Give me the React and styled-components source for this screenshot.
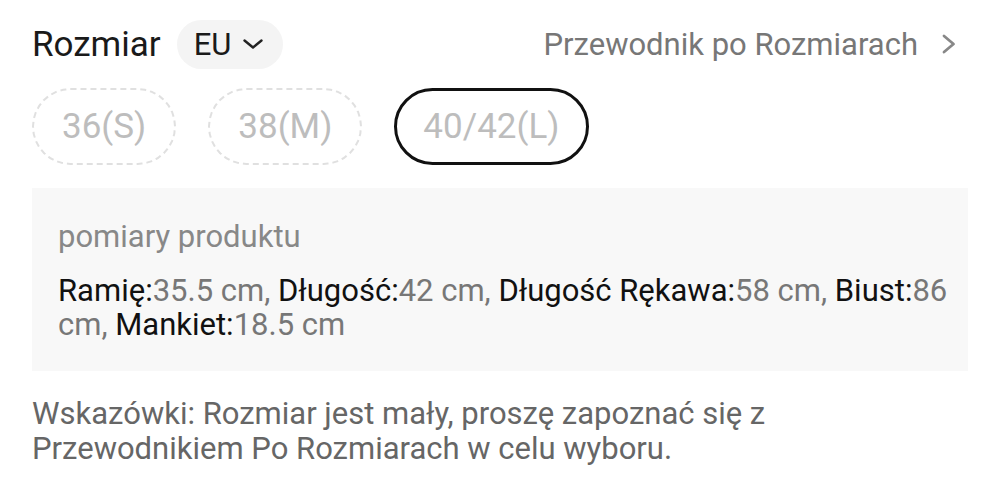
import React from 'react'
import styled, { createGlobalStyle } from 'styled-components'

const sizes = [
    { label: '36(S)', selected: false },
    { label: '38(M)', selected: false },
    { label: '40/42(L)', selected: true },
]

const measures = [
    { name: 'Ramię', value: '35.5 cm' },
    { name: 'Długość', value: '42 cm' },
    { name: 'Długość Rękawa', value: '58 cm' },
    { name: 'Biust', value: '86 cm' },
    { name: 'Mankiet', value: '18.5 cm' },
]

const GlobalStyle = createGlobalStyle`
    html, body {
        margin: 0;
        padding: 0;
        background: #fff;
    }
    body {
        font-family: Roboto, "Noto Sans", Arial, sans-serif;
        -webkit-font-smoothing: antialiased;
    }
`

const Page = styled.div`
    width: 1000px;
    height: 492px;
    box-sizing: border-box;
    padding: 19px 32px 0 32px;
    background: #fff;
    overflow: hidden;
`

const Header = styled.div`
    display: flex;
    align-items: center;
    justify-content: space-between;
    height: 50px;
`

const TitleGroup = styled.div`
    display: flex;
    align-items: center;
    gap: 16px;
`

const Title = styled.h2`
    margin: 0;
    font-size: 35px;
    font-weight: 400;
    color: #1a1a1a;
    line-height: 1;
`

const UnitPicker = styled.button`
    display: flex;
    align-items: center;
    gap: 12px;
    height: 49px;
    padding: 0 20px 0 17px;
    border: none;
    border-radius: 25px;
    background: #f4f4f4;
    font-family: inherit;
    font-size: 31px;
    color: #1a1a1a;
    cursor: pointer;
`

const GuideLink = styled.a`
    display: flex;
    align-items: center;
    gap: 24px;
    margin-right: 12px;
    font-size: 31px;
    color: #777;
    text-decoration: none;
`

const SizeRow = styled.div`
    display: flex;
    gap: 32px;
    margin-top: 19px;
`

const SizePill = styled.div`
    display: flex;
    align-items: center;
    justify-content: center;
    box-sizing: border-box;
    height: 77px;
    border-radius: 39px;
    border: ${p => (p.$selected ? '3px solid #111' : '2px dashed #e0e0e0')};
    padding: ${p => (p.$selected ? '0 26px' : '0 28px')};
    font-size: 35px;
    color: #bdbdbd;
`

const MeasureBox = styled.div`
    margin-top: 23px;
    background: #f8f8f8;
    padding: 31px 20px 29px 26px;
`

const MeasureTitle = styled.div`
    font-size: 31px;
    line-height: 35px;
    color: #888;
`

const MeasureText = styled.p`
    margin: 20px 0 0 0;
    font-size: 31px;
    line-height: 34px;
    color: #777;
`

const MeasureName = styled.span`
    color: #111;
`

const Tip = styled.p`
    margin: 25px 0 0 0;
    font-size: 31px;
    line-height: 35px;
    color: #666;
`

const ChevronDown = () => (
    <svg width="20" height="10" viewBox="0 0 20 10" fill="none">
        <polyline points="1.5,1.5 10,8.5 18.5,1.5" stroke="#222" strokeWidth="2.4" strokeLinecap="round" strokeLinejoin="round" />
    </svg>
)

const ChevronRight = () => (
    <svg width="14" height="20" viewBox="0 0 14 20" fill="none">
        <polyline points="2,2 11.5,10 2,18" stroke="#888" strokeWidth="2.8" strokeLinecap="round" strokeLinejoin="round" />
    </svg>
)

const App = () => {
    return (
        <>
            <GlobalStyle />
            <Page>
                <Header>
                    <TitleGroup>
                        <Title>Rozmiar</Title>
                        <UnitPicker>
                            EU
                            <ChevronDown />
                        </UnitPicker>
                    </TitleGroup>
                    <GuideLink href="#">
                        Przewodnik po Rozmiarach
                        <ChevronRight />
                    </GuideLink>
                </Header>
                <SizeRow>
                    {sizes.map((item, index) => (
                        <SizePill key={index} $selected={item.selected}>{item.label}</SizePill>
                    ))}
                </SizeRow>
                <MeasureBox>
                    <MeasureTitle>pomiary produktu</MeasureTitle>
                    <MeasureText>
                        {measures.map((m, index) => (
                            <React.Fragment key={index}>
                                <MeasureName>{m.name}:</MeasureName>{m.value}{index < measures.length - 1 ? ', ' : ''}
                            </React.Fragment>
                        ))}
                    </MeasureText>
                </MeasureBox>
                <Tip>
                    Wskazówki: Rozmiar jest mały, proszę zapoznać się z<br />
                    Przewodnikiem Po Rozmiarach w celu wyboru.
                </Tip>
            </Page>
        </>
    )
}

export default App
